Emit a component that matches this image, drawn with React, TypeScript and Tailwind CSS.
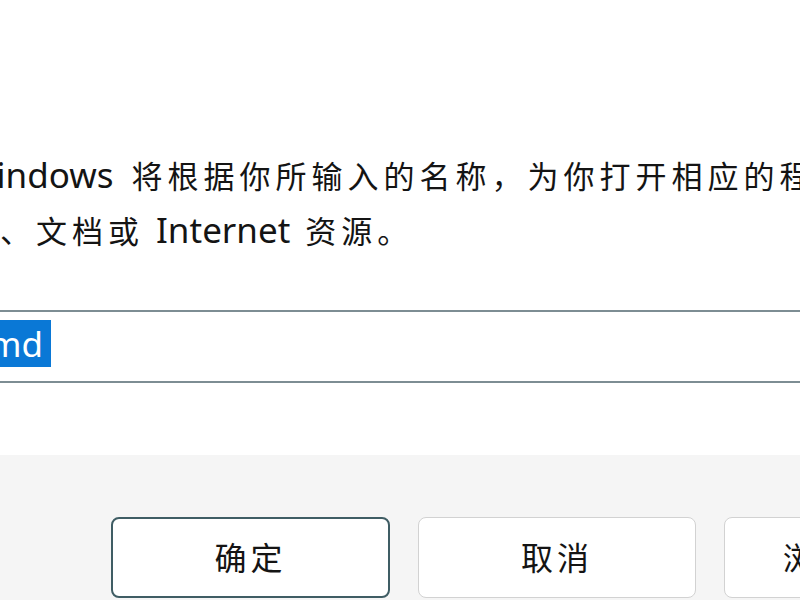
import React from 'react';

const font = { fontFamily: '"Noto Sans", "Noto Sans CJK SC", sans-serif' };

const Cjk: React.FC<{ className?: string; children: React.ReactNode }> = ({ className, children }) => (
  <span className={`text-[31px] tracking-[5px] ${className ?? ''}`}>{children}</span>
);

const RunDialog: React.FC = () => {
  return (
    <div className="w-[800px] h-[600px] overflow-hidden bg-white flex flex-col text-[#141414]" style={font}>
      <div className="h-[455px] bg-white flex flex-col">
        <div className="mt-[148px] -ml-[36px] text-[35px] leading-[53px] whitespace-nowrap">
          <div>
            Windows<Cjk className="ml-[18px]">将根据你所输入的名称，为你打开相应的程序、文件</Cjk>
          </div>
          <div>
            <Cjk>夹、文档或</Cjk>
            <span className="ml-[12px]">Internet</span>
            <Cjk className="ml-[15px]">资源。</Cjk>
          </div>
        </div>
        <div className="mt-[52px] -mx-[20px] h-[73px] border-t-2 border-b-2 border-[#7d8d93] bg-white flex items-start">
          <span className="ml-[20px] mt-[8px] h-[47px] w-[51px] overflow-hidden bg-[#0a78d6] flex items-center">
            <span className="-ml-[28px] text-[35px] leading-none text-white whitespace-nowrap">cmd</span>
          </span>
        </div>
      </div>
      <div className="flex-1 bg-[#f5f5f5] flex gap-[28px] pl-[111px] pt-[62px]">
        <button className="shrink-0 w-[279px] h-[81px] rounded-[8px] border-2 border-[#3f5d64] bg-white text-[32px] tracking-[4px] text-[#141414]">
          确定
        </button>
        <button className="shrink-0 w-[278px] h-[81px] rounded-[8px] border border-[#d2d2d2] bg-white text-[32px] tracking-[4px] text-[#141414]">
          取消
        </button>
        <button className="shrink-0 w-[279px] h-[81px] rounded-[8px] border border-[#d2d2d2] bg-white text-[32px] tracking-[4px] text-[#141414]">
          浏览(B)...
        </button>
      </div>
    </div>
  );
};

export default function App() {
  return <RunDialog />;
}
